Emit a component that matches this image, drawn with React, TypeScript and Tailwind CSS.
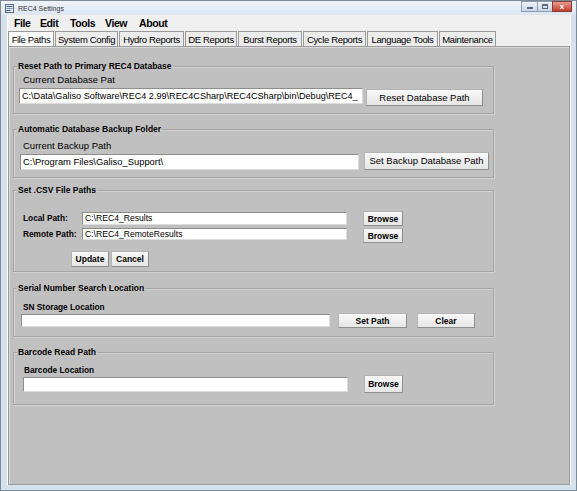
import React from "react";

const tabs: { label: string; w: string; sel?: boolean }[] = [
  { label: "File Paths", w: "w-[46px]", sel: true },
  { label: "System Config", w: "w-[63px]" },
  { label: "Hydro Reports", w: "w-[65px]" },
  { label: "DE Reports", w: "w-[52px]" },
  { label: "Burst Reports", w: "w-[64px]" },
  { label: "Cycle Reports", w: "w-[63px]" },
  { label: "Language Tools", w: "w-[71px]" },
  { label: "Maintenance", w: "w-[57px]" },
];

const menu: { label: string; w: string }[] = [
  { label: "File", w: "w-[26px]" },
  { label: "Edit", w: "w-[30px]" },
  { label: "Tools", w: "w-[35px]" },
  { label: "View", w: "w-[34px]" },
  { label: "About", w: "w-[34px]" },
];

function Btn({ children, className }: { children: React.ReactNode; className: string }) {
  return (
    <div
      className={
        "flex shrink-0 items-center justify-center border border-[#b4b4b4] border-r-[#8e8e8e] border-b-[#8e8e8e] bg-gradient-to-b from-[#f8f8f8] to-[#e6e6e6] text-black whitespace-nowrap " +
        className
      }
    >
      {children}
    </div>
  );
}

function Field({ children, className }: { children?: React.ReactNode; className: string }) {
  return (
    <div
      className={
        "shrink-0 overflow-hidden whitespace-nowrap border border-[#8d8d8d] border-r-[#dcdcdc] border-b-[#dcdcdc] bg-white pl-[2px] text-black " +
        className
      }
    >
      {children}
    </div>
  );
}

function Group({
  title,
  className,
  children,
}: {
  title: string;
  className: string;
  children: React.ReactNode;
}) {
  return (
    <fieldset
      className={
        "w-[481px] shrink-0 border border-[#a4a4a4] pl-[3px] shadow-[inset_1px_1px_0_#d2d2d2,1px_1px_0_#d2d2d2] " +
        className
      }
    >
      <legend className="px-[1px] text-[8.5px] font-bold leading-[10px] text-black">{title}</legend>
      {children}
    </fieldset>
  );
}

export default function App() {
  return (
    <div
      className="flex h-[491px] w-[577px] flex-col overflow-hidden border border-[#7d8a98] bg-[#d6e1ee]"
      style={{ fontFamily: '"Liberation Sans", Arial, sans-serif' }}
    >
      {/* Title bar */}
      <div className="flex h-[14px] shrink-0 items-start bg-gradient-to-b from-[#eef3f9] to-[#dce6f1]">
        <div className="ml-[4px] mt-[3px] flex h-[9px] w-[9px] items-center justify-center">
          <svg width="9" height="9" viewBox="0 0 9 9">
            <rect x="0.5" y="0.5" width="8" height="8" fill="#dfe6ee" stroke="#5d6f86" strokeWidth="1" />
            <rect x="1.5" y="2" width="6" height="1" fill="#3f5f8a" />
            <rect x="1.5" y="4" width="6" height="1" fill="#7d93b0" />
            <rect x="1.5" y="6" width="4" height="1" fill="#3f5f8a" />
          </svg>
        </div>
        <span className="ml-[4px] mt-[3px] text-[7px] leading-[9px] text-[#333]">REC4 Settings</span>
        <div className="ml-auto mr-[4px] flex h-[11px] items-stretch">
          <div className="flex w-[16px] items-center justify-center border border-[#8c9bb0] border-r-0 bg-gradient-to-b from-[#eef3f8] to-[#c9d6e6]">
            <div className="mt-[3px] h-[2px] w-[6px] bg-[#5a6a80]" />
          </div>
          <div className="flex w-[15px] items-center justify-center border border-[#8c9bb0] border-r-0 bg-gradient-to-b from-[#eef3f8] to-[#c9d6e6]">
            <div className="h-[5px] w-[6px] border border-t-2 border-[#5a6a80]" />
          </div>
          <div className="flex w-[20px] items-center justify-center border border-[#8a3b33] bg-gradient-to-b from-[#e49a8e] to-[#c43b2b] text-[8px] font-bold leading-none text-white">
            x
          </div>
        </div>
      </div>

      {/* Client area */}
      <div className="mb-[5px] ml-[6px] mr-[5px] flex flex-1 flex-col border-l border-r border-white bg-[#f0f0f0]">
        {/* Menu */}
        <div className="flex h-[16px] shrink-0 items-center pl-[6px]">
          {menu.map((m) => (
            <span
              key={m.label}
              className={"text-[10.5px] font-bold leading-[12px] tracking-[-0.4px] text-black " + m.w}
            >
              {m.label}
            </span>
          ))}
        </div>

        {/* Tab strip */}
        <div className="flex h-[15px] shrink-0 items-end gap-[1px]">
          {tabs.map((t) => (
            <div
              key={t.label}
              className={
                "flex h-[15px] items-center justify-center border border-b-0 border-[#9a9a9a] text-[9.5px] leading-[11px] tracking-[-0.35px] whitespace-nowrap text-black " +
                t.w +
                (t.sel ? " bg-white" : " bg-[#ececec]")
              }
            >
              {t.label}
            </div>
          ))}
        </div>

        {/* Tab page */}
        <div className="flex flex-1 flex-col border border-[#9a9a9a] bg-[#c0c0c0] pl-[4px] shadow-[inset_1px_1px_0_#d8d8d8]">
          {/* Group 1 */}
          <Group title="Reset Path to Primary REC4 Database" className="mt-[14px] h-[53px]">
            <div className="ml-[6px] mt-[3px] text-[9.5px] leading-[12px] text-black">Current Database Pat</div>
            <div className="mt-[2px] flex items-start">
              <Field className="ml-[2px] h-[16px] w-[344px] text-[9.1px] leading-[14px]">
                C:\Data\Galiso Software\REC4 2.99\REC4CSharp\REC4CSharp\bin\Debug\REC4_
              </Field>
              <Btn className="ml-[3px] mt-[1px] h-[17px] w-[117px] text-[9.5px] leading-[12px]">Reset Database Path</Btn>
            </div>
          </Group>

          {/* Group 2 */}
          <Group title="Automatic Database Backup Folder" className="mt-[10px] h-[54px]">
            <div className="ml-[6px] mt-[6px] text-[9.5px] leading-[12px] text-black">Current Backup Path</div>
            <div className="flex items-start">
              <Field className="ml-[3px] mt-[2px] h-[16px] w-[339px] text-[9.4px] leading-[14px]">
                C:\Program Files\Galiso_Support\
              </Field>
              <Btn className="ml-[5px] h-[18px] w-[125px] text-[9.5px] leading-[12px]">Set Backup Database Path</Btn>
            </div>
          </Group>

          {/* Group 3 */}
          <Group title="Set .CSV File Paths" className="mt-[7px] h-[87px]">
            <div className="ml-[6px] mt-[16px] flex h-[15px] items-start">
              <span className="mt-[2px] w-[59px] text-[8.3px] font-bold leading-[10px] text-black">Local Path:</span>
              <Field className="mt-[1px] h-[13px] w-[265px] text-[8.6px] leading-[11px]">C:\REC4_Results</Field>
              <Btn className="ml-[16px] h-[15px] w-[40px] text-[8.5px] font-bold leading-[10px]">Browse</Btn>
            </div>
            <div className="ml-[6px] mt-[2px] flex h-[15px] items-start">
              <span className="mt-[1px] w-[59px] text-[8.3px] font-bold leading-[10px] text-black">Remote Path:</span>
              <Field className="h-[12px] w-[265px] text-[8.6px] leading-[10px]">C:\REC4_RemoteResults</Field>
              <Btn className="ml-[16px] h-[15px] w-[40px] text-[8.5px] font-bold leading-[10px]">Browse</Btn>
            </div>
            <div className="ml-[54px] mt-[8px] flex gap-[2px]">
              <Btn className="h-[16px] w-[38px] text-[8.5px] font-bold leading-[10px]">Update</Btn>
              <Btn className="h-[16px] w-[38px] text-[8.5px] font-bold leading-[10px]">Cancel</Btn>
            </div>
          </Group>

          {/* Group 4 */}
          <Group title="Serial Number Search Location" className="mt-[11px] h-[54px]">
            <div className="ml-[6px] mt-[9px] text-[8.3px] font-bold leading-[10px] text-black">SN Storage Location</div>
            <div className="mt-[1px] flex items-start">
              <Field className="ml-[4px] mt-[1px] h-[13px] w-[309px]" />
              <Btn className="ml-[8px] h-[15px] w-[69px] text-[8.5px] font-bold leading-[10px]">Set Path</Btn>
              <Btn className="ml-[10px] h-[15px] w-[58px] text-[8.5px] font-bold leading-[10px]">Clear</Btn>
            </div>
          </Group>

          {/* Group 5 */}
          <Group title="Barcode Read Path" className="mt-[10px] h-[58px]">
            <div className="ml-[7px] mt-[8px] text-[8.3px] font-bold leading-[10px] text-black">Barcode Location</div>
            <div className="flex items-start">
              <Field className="ml-[6px] mt-[2px] h-[15px] w-[325px]" />
              <Btn className="ml-[16px] h-[18px] w-[39px] text-[8.5px] font-bold leading-[10px]">Browse</Btn>
            </div>
          </Group>
        </div>
      </div>
    </div>
  );
}
